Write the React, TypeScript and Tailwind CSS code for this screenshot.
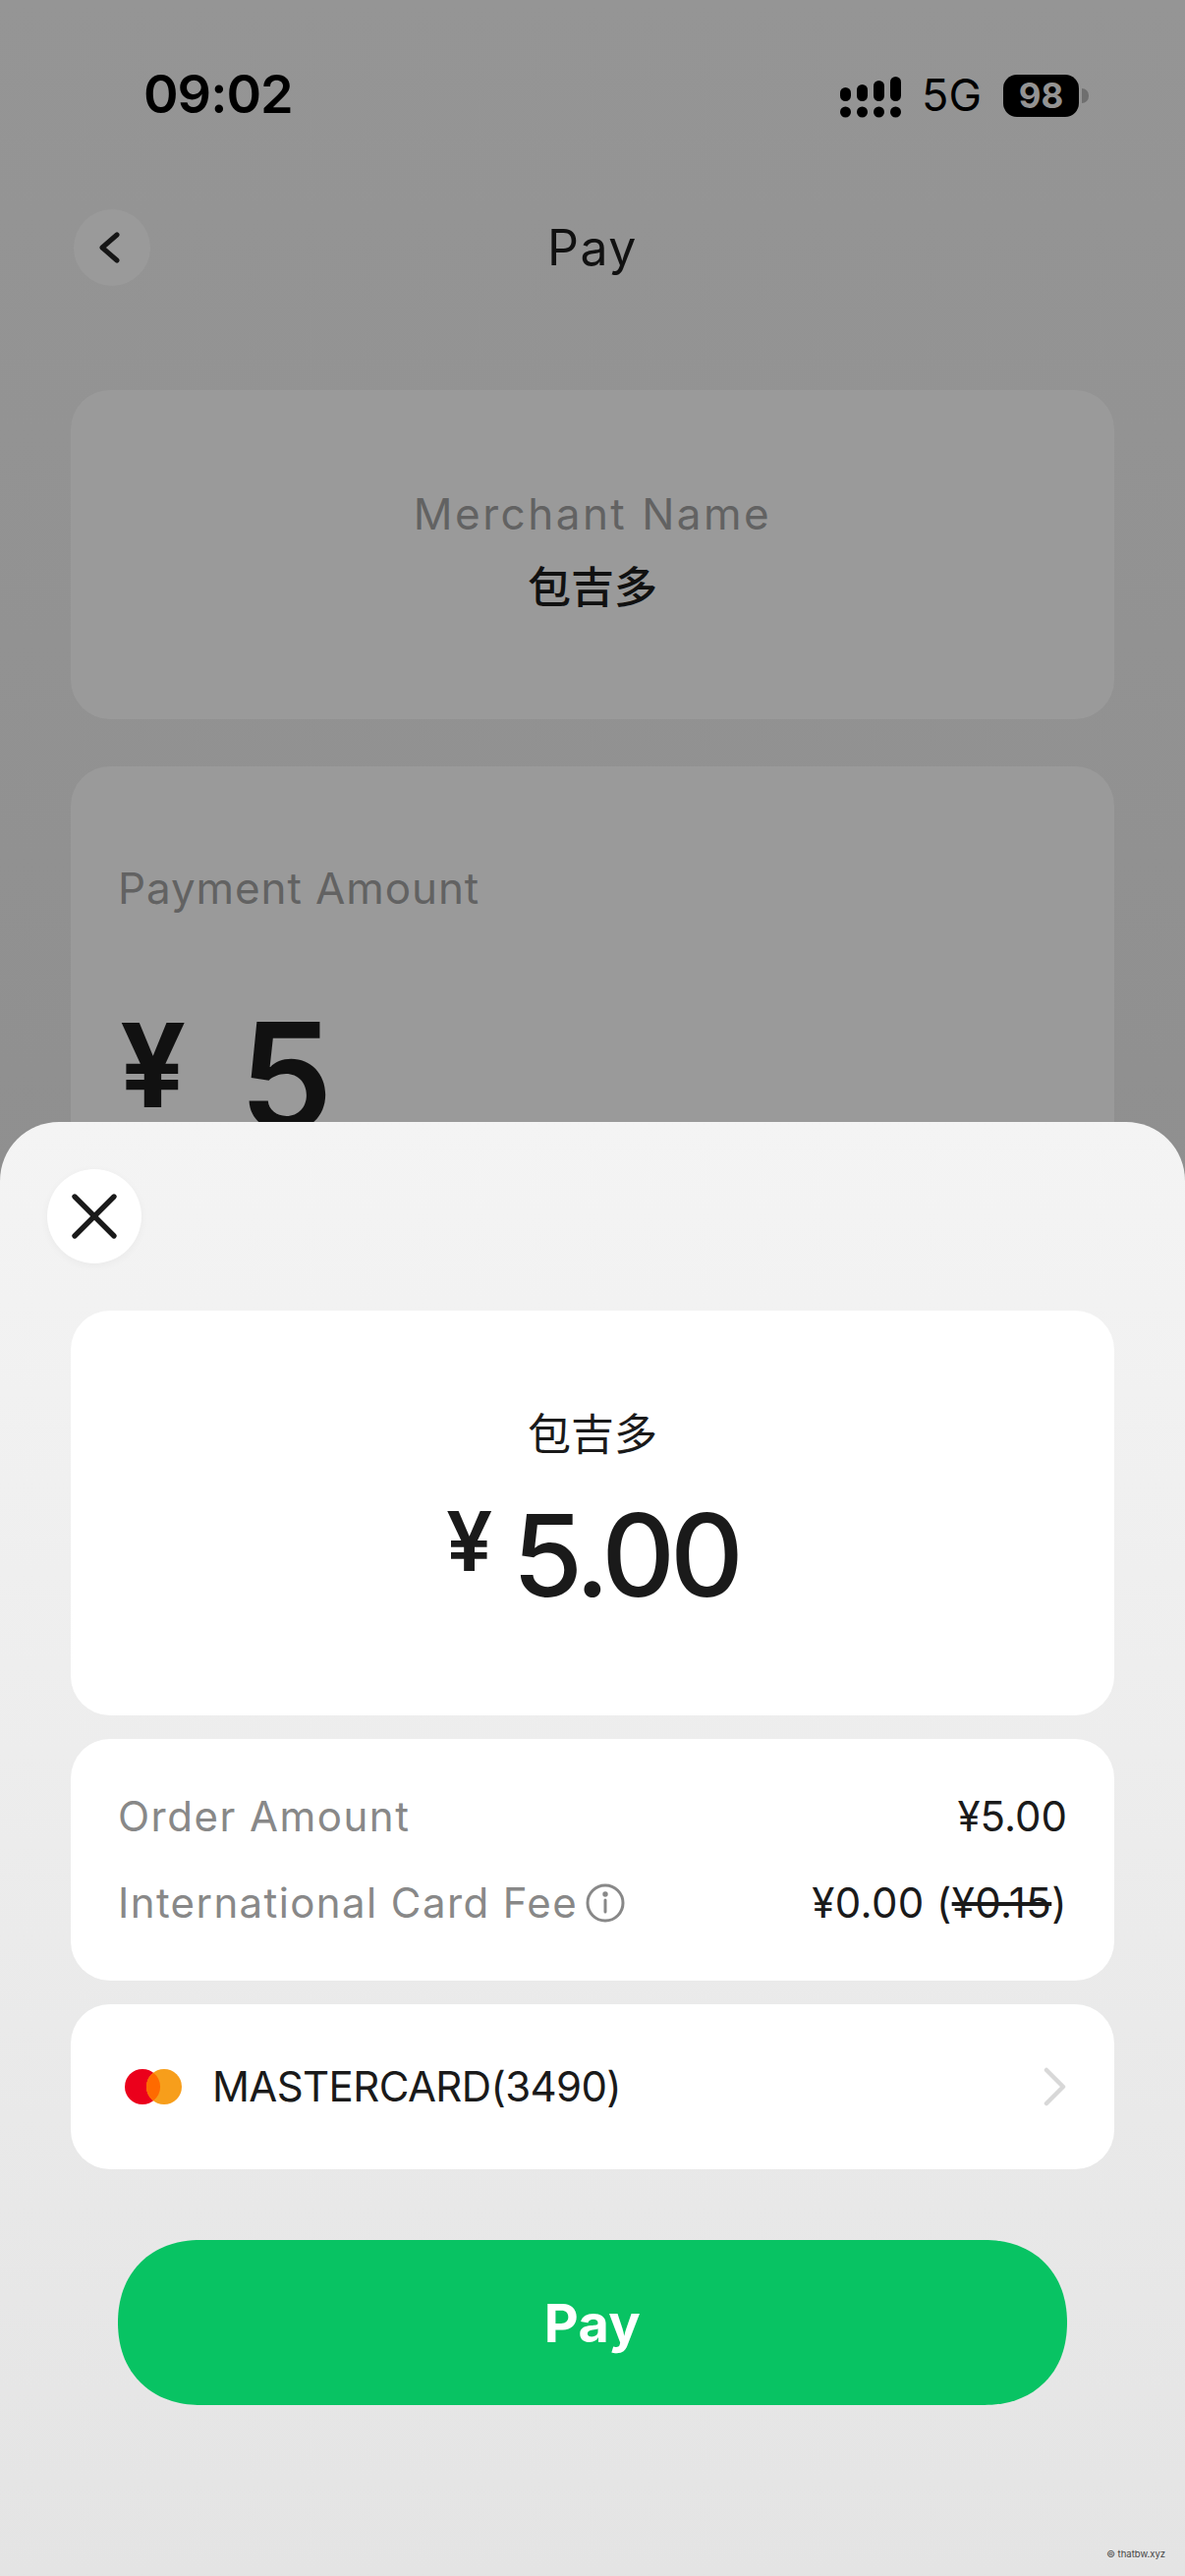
import { X } from 'lucide-react'

const FONT = "font-['Inter','Noto_Sans_CJK_SC',sans-serif]"

function SignalIcon() {
  const columns = [
    { x: 0, top: 11 },
    { x: 17, top: 8 },
    { x: 34, top: 4 },
    { x: 51, top: 0 },
  ]
  return (
    <svg width="62" height="42" viewBox="0 0 62 42" className="mt-[4px]">
      {columns.map((col) => (
        <g key={col.x} fill="#000">
          <rect x={col.x} y={col.top} width="11" height={25 - col.top} rx="5.5" />
          <circle cx={col.x + 5.5} cy="36" r="5.5" />
        </g>
      ))}
    </svg>
  )
}

function StatusBar() {
  return (
    <div className="flex h-[213px] items-start justify-between pl-[146px] pr-[108px] pt-[68px] text-black">
      <span className="text-[54px] font-semibold leading-[56px] tracking-[-1px]">09:02</span>
      <div className="flex items-center pt-[6px]">
        <SignalIcon />
        <span className="ml-[21px] text-[45px] font-normal leading-[46px]">5G</span>
        <div className="relative ml-[22px] flex h-[43px] w-[77px] items-center justify-center rounded-[14px] bg-black text-[35px] font-bold leading-none text-[#939393]">
          98
          <span className="absolute right-[-10px] top-[14px] h-[15px] w-[7px] rounded-r-full bg-[#6f6f6f]" />
        </div>
      </div>
    </div>
  )
}

function Backdrop() {
  return (
    <div className="h-[2622px] overflow-hidden bg-gradient-to-b from-[#959595] via-[#8f8f8f] to-[#8f8f8f]">
      <StatusBar />
      <div className="relative flex h-[78px] items-center justify-center">
        <div className="absolute left-[75px] top-0 flex h-[78px] w-[78px] items-center justify-center rounded-full bg-[#9a9a9a]">
          <svg width="24" height="32" viewBox="0 0 24 32" fill="none" stroke="#161616" strokeWidth="5" strokeLinecap="round" strokeLinejoin="round" className="ml-[-6px]">
            <path d="M20 3 L5 16 L20 29" />
          </svg>
        </div>
        <span className="text-[50px] font-normal leading-[78px] tracking-[1.5px] text-[#111111]">Pay</span>
      </div>
      <div className="mx-[72px] mt-[106px] flex h-[335px] flex-col items-center rounded-[40px] bg-[#9a9a9a] pt-[98px]">
        <span className="text-[44px] leading-[56px] tracking-[2.5px] text-[#626262]">Merchant Name</span>
        <span className="mt-[21px] text-[44px] font-medium leading-[52px] text-[#111111]">包吉多</span>
      </div>
      <div className="mx-[72px] mt-[48px] h-[600px] rounded-[40px] bg-[#9a9a9a] px-[48px] pt-[96px]">
        <div className="text-[44px] leading-[56px] tracking-[0.9px] text-[#626262]">Payment Amount</div>
        <div className="mt-[84px] flex items-start pl-[2px] text-[#111111]">
          <span className="mt-[3px] text-[118px] font-bold leading-[130px]">¥</span>
          <span className="ml-[54px] text-[152px] font-semibold leading-[160px]">5</span>
        </div>
      </div>
    </div>
  )
}

function FeeRows() {
  return (
    <div className="mt-[24px] h-[246px] rounded-[40px] bg-white pl-[48px] pr-[48px] pt-[50px] text-[42px] leading-[58px]">
      <div className="flex items-center justify-between">
        <span className="tracking-[1.5px] text-[#888888]">Order Amount</span>
        <span className="text-[#1a1a1a]">¥5.00</span>
      </div>
      <div className="mt-[30px] flex items-center justify-between">
        <div className="flex items-center">
          <span className="tracking-[1.4px] text-[#888888]">International Card Fee</span>
          <svg width="40" height="40" viewBox="0 0 40 40" className="ml-[8px]" fill="none" stroke="#888888" strokeWidth="3">
            <circle cx="20" cy="20" r="18" />
            <path d="M20 17v12" strokeLinecap="round" />
            <circle cx="20" cy="11" r="1.2" fill="#888888" />
          </svg>
        </div>
        <span className="tracking-[0.4px] text-[#1a1a1a]">
          ¥0.00 (<span className="line-through">¥0.15</span>)
        </span>
      </div>
    </div>
  )
}

function CardRow() {
  return (
    <div className="mt-[24px] flex h-[168px] items-center rounded-[40px] bg-white pl-[55px] pr-[48px]">
      <svg width="58" height="36" viewBox="0 0 58 36">
        <circle cx="18" cy="18" r="18" fill="#eb001b" />
        <circle cx="40" cy="18" r="18" fill="#f79e1b" />
        <path d="M29 3.7a18 18 0 0 1 0 28.6a18 18 0 0 1 0-28.6z" fill="#ff6a00" />
      </svg>
      <span className="ml-[31px] text-[42px] leading-[58px] tracking-[-0.6px] text-[#1a1a1a]">MASTERCARD(3490)</span>
      <svg width="24" height="40" viewBox="0 0 24 40" fill="none" stroke="#d8d8d8" strokeWidth="4.5" strokeLinecap="round" strokeLinejoin="round" className="ml-auto">
        <path d="M3 3 L20 20 L3 37" />
      </svg>
    </div>
  )
}

function PaySheet() {
  return (
    <div className="absolute inset-x-0 bottom-0 top-[1142px] rounded-t-[60px] bg-gradient-to-b from-[#f4f4f4] to-[#e4e4e4] pt-[48px]">
      <div className="ml-[48px] flex h-[96px] w-[96px] items-center justify-center rounded-full bg-white shadow-[0_2px_8px_rgba(0,0,0,0.04)]">
        <X className="h-[80px] w-[80px] text-[#1a1a1a]" strokeWidth={1.6} />
      </div>
      <div className="mx-[72px] mt-[48px]">
        <div className="flex h-[412px] flex-col items-center rounded-[40px] bg-white pt-[98px] text-[#1a1a1a]">
          <span className="text-[44px] font-normal leading-[56px]">包吉多</span>
          <div className="mt-[35px] flex items-start">
            <span className="mt-[3px] text-[84px] font-semibold leading-[86px]">¥</span>
            <span className="ml-[20px] text-[116px] font-medium leading-[120px] tracking-[-5px]">5.00</span>
          </div>
        </div>
        <FeeRows />
        <CardRow />
        <button className="mx-[48px] mt-[72px] flex h-[168px] w-[966px] items-center justify-center rounded-[84px] bg-[#08c363] text-[54px] font-bold tracking-[0.5px] text-white [corner-shape:superellipse(1.12)]">
          Pay
        </button>
      </div>
      <div className="absolute bottom-[16px] right-[20px] text-[9.5px] leading-[12px] text-[#444444]">© thatbw.xyz</div>
    </div>
  )
}

export default function App() {
  return (
    <div className={`relative h-[2622px] w-[1206px] overflow-hidden ${FONT}`}>
      <Backdrop />
      <PaySheet />
    </div>
  )
}
